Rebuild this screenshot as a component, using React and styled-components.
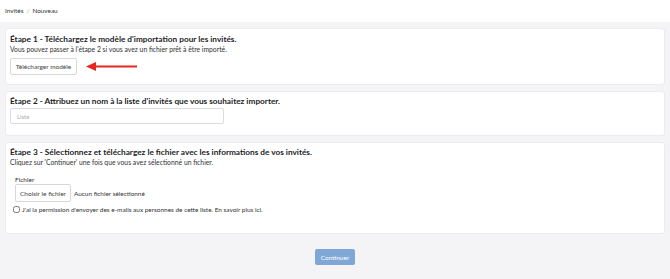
import React from "react";
import styled, { createGlobalStyle } from "styled-components";

const Global = createGlobalStyle`
  html, body { margin: 0; padding: 0; background: #f4f4f7; }
  body { font-family: Lato, "Open Sans", sans-serif; color: #222; }
  * { box-sizing: border-box; }
`;

const Page = styled.div`
  width: 670px;
  min-height: 279px;
  background: #f4f4f7;
`;

const TopBar = styled.div`
  height: 22px;
  background: #fff;
  display: flex;
  align-items: center;
  padding: 0 5px 2px;
  font-size: 6.4px;
  color: #333;
  gap: 3px;
`;

const Sep = styled.span`
  color: #aaa;
`;

const Main = styled.div`
  padding: 6px 5px 0;
  display: flex;
  flex-direction: column;
  gap: 6px;
`;

const Card = styled.section`
  background: #fff;
  border: 1px solid #ececf0;
  border-radius: 3px;
  padding: ${p => p.$pt || "4px"} 4px 0;
  height: ${p => p.$h};
`;

const Title = styled.h2`
  margin: 0;
  font-size: 8.25px;
  font-weight: 700;
  line-height: 11px;
  color: #1d1d1f;
`;

const Sub = styled.p`
  margin: 0;
  font-size: 6.8px;
  line-height: 9px;
  color: #333;
`;

const Row = styled.div`
  display: flex;
  align-items: center;
  gap: 9px;
  margin-top: 4px;
`;

const GhostButton = styled.button`
  font-family: inherit;
  font-size: 6.5px;
  color: #444;
  background: #fff;
  border: 1px solid #d8d8dc;
  border-radius: 2px;
  height: ${p => p.$h || "17px"};
  width: ${p => p.$w};
  padding: 0;
  cursor: pointer;
`;

const Input = styled.input`
  display: block;
  margin-top: 1px;
  width: 214px;
  height: 16px;
  border: 1px solid #dcdce0;
  border-radius: 2px;
  padding: 0 6px;
  font-family: inherit;
  font-size: 6px;
  &::placeholder { color: #aaa; }
`;

const Group = styled.div`
  padding-left: 5px;
  margin-top: 9px;
`;

const Label = styled.div`
  font-size: 6.5px;
  line-height: 8px;
  color: #333;
`;

const FileRow = styled.div`
  display: flex;
  align-items: center;
  gap: 3px;
  font-size: 6.4px;
  color: #333;
`;

const Check = styled.label`
  display: flex;
  align-items: center;
  gap: 2px;
  margin-top: 3px;
  margin-left: -2px;
  font-size: 6.45px;
  line-height: 9px;
  color: #333;
  & input { margin: 0; width: 7px; height: 7px; }
`;

const Footer = styled.div`
  display: flex;
  justify-content: center;
  padding-top: 15px;
`;

const Primary = styled.button`
  font-family: inherit;
  font-size: 6.5px;
  color: #fff;
  background: #7fa7d6;
  border: none;
  border-radius: 2px;
  width: 40px;
  height: 16px;
  padding: 0;
`;

function Arrow() {
  return (
    <svg width="51" height="9" viewBox="0 0 51 9">
      <path d="M9 4.5 H51" stroke="#e8261d" strokeWidth="2" />
      <path d="M0 4.5 L10 0 L10 9 Z" fill="#e8261d" />
    </svg>
  );
}

export default function App() {
  return (
    <Page>
      <Global />
      <TopBar>
        <span>Invités</span>
        <Sep>/</Sep>
        <span>Nouveau</span>
      </TopBar>
      <Main>
        <Card $h="57px" $pt="5px">
          <Title>Étape 1 - Téléchargez le modèle d'importation pour les invités.</Title>
          <Sub>Vous pouvez passer à l'étape 2 si vous avez un fichier prêt à être importé.</Sub>
          <Row>
            <GhostButton $w="67px">Télécharger modèle</GhostButton>
            <Arrow />
          </Row>
        </Card>
        <Card $h="45px">
          <Title>Étape 2 - Attribuez un nom à la liste d'invités que vous souhaitez importer.</Title>
          <Input placeholder="Liste" />
        </Card>
        <Card $h="92px">
          <Title>Étape 3 - Sélectionnez et téléchargez le fichier avec les informations de vos invités.</Title>
          <Sub>Cliquez sur 'Continuer' une fois que vous avez sélectionné un fichier.</Sub>
          <Group>
            <Label>Fichier</Label>
            <FileRow>
              <GhostButton $h="18px" $w="56px">Choisir le fichier</GhostButton>
              <span>Aucun fichier sélectionné</span>
            </FileRow>
            <Check>
              <input type="checkbox" />
              <span>J'ai la permission d'envoyer des e-mails aux personnes de cette liste. En savoir plus ici.</span>
            </Check>
          </Group>
        </Card>
      </Main>
      <Footer>
        <Primary>Continuer</Primary>
      </Footer>
    </Page>
  );
}
